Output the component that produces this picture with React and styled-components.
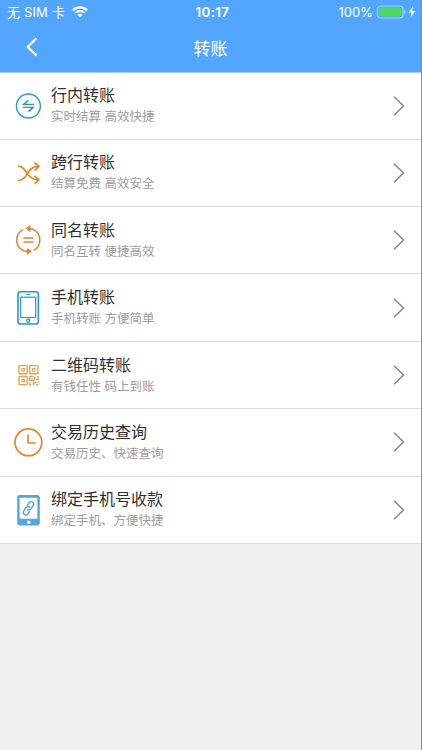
import styled, { createGlobalStyle } from "styled-components";

const ORANGE = "#e0852a";
const TEAL = "#2b97c0";

const items = [
  { title: "行内转账", desc: "实时结算 高效快捷", icon: <ExchangeIcon /> },
  { title: "跨行转账", desc: "结算免费 高效安全", icon: <ShuffleIcon /> },
  { title: "同名转账", desc: "同名互转 便捷高效", icon: <CycleIcon /> },
  { title: "手机转账", desc: "手机转账 方便简单", icon: <PhoneIcon /> },
  { title: "二维码转账", desc: "有钱任性 码上到账", icon: <QrIcon /> },
  { title: "交易历史查询", desc: "交易历史、快速查询", icon: <ClockIcon /> },
  { title: "绑定手机号收款", desc: "绑定手机、方便快捷", icon: <BindIcon /> },
];

function ExchangeIcon() {
  return (
    <Icon viewBox="0 0 30 34" $color={TEAL}>
      <circle cx="15.4" cy="17" r="12" strokeWidth="1.4" />
      <path d="M21 15.4H10.6L15.4 11.2M9.8 18.4H20.2L15.4 22.6" strokeWidth="1.4" />
    </Icon>
  );
}

function ShuffleIcon() {
  return (
    <Icon viewBox="0 0 30 34" $color={ORANGE}>
      <path
        d="M4.8 10.2C14.6 10.2 13 23.8 25.4 23.8M4.8 24.5C15.8 24.5 12.6 10.4 25.4 10.4"
        strokeWidth="1.7"
      />
      <path d="M21.4 6.6L25.8 10.4L21.8 14.6M21.4 19.8L25.8 23.8L21.8 27.8" strokeWidth="1.8" />
    </Icon>
  );
}

function CycleIcon() {
  return (
    <Icon viewBox="0 0 30 34" $color={ORANGE}>
      <path
        d="M10.2 6.6A11.7 11.7 0 0 0 10.6 27.8L15.4 28.6M20.6 27.4A11.7 11.7 0 0 0 20 6.4L15.4 5.6"
        strokeWidth="1.5"
      />
      <path
        d="M12.6 5.6L17.4 2V9.2ZM18.8 28.4L14.2 24.8V31.8Z"
        fill={ORANGE}
        stroke="none"
      />
      <path d="M10.4 15H20.6M10.4 19H20.6" strokeWidth="1.5" />
    </Icon>
  );
}

function PhoneIcon() {
  return (
    <Icon viewBox="0 0 30 34" $color={TEAL}>
      <rect x="5" y="0.8" width="20.4" height="32.2" rx="2.6" strokeWidth="1.6" />
      <rect x="7.7" y="6.2" width="15" height="20.3" strokeWidth="1.2" />
      <path d="M13.2 3.5H17.2" strokeWidth="1.2" />
      <circle cx="15.2" cy="29.7" r="1.6" strokeWidth="1.3" />
    </Icon>
  );
}

function QrIcon() {
  return (
    <Icon viewBox="0 0 30 34" $color="#e4a058">
      <rect x="6" y="7.6" width="8.2" height="8.2" rx="0.6" strokeWidth="1.4" />
      <rect x="16.8" y="7.6" width="8.2" height="8.2" rx="0.6" strokeWidth="1.4" />
      <rect x="6" y="18.4" width="8.2" height="8.2" rx="0.6" strokeWidth="1.4" />
      <rect x="9" y="10.6" width="2.4" height="2.4" strokeWidth="1.1" />
      <rect x="19.6" y="10.6" width="2.4" height="2.4" strokeWidth="1.1" />
      <rect x="9" y="21.4" width="2.4" height="2.4" strokeWidth="1.1" />
      <path
        d="M20.4 18.4H16.8V22.6H19V20.7M21.7 22.2V18.6M24.9 17.9V21.6H23.2M19.8 22.8H21.4M16.8 24.6V26.8H18.4M20.5 27.2V24.7H23M24.9 23.4V24.8M22.8 26.7H25.4"
        strokeWidth="1.4"
      />
    </Icon>
  );
}

function ClockIcon() {
  return (
    <Icon viewBox="0 0 30 34" $color={ORANGE}>
      <circle cx="15.4" cy="17.3" r="13.4" strokeWidth="1.7" />
      <path d="M15 9.4V18H22.8" strokeWidth="1.6" />
    </Icon>
  );
}

function BindIcon() {
  return (
    <Icon viewBox="0 0 30 34" $color="#56a5dc">
      <rect x="4.2" y="2" width="22.6" height="30.4" rx="2.4" fill="#56a5dc" stroke="none" />
      <rect x="6.6" y="4.8" width="17.8" height="21" rx="1" fill="#fff" stroke="none" />
      <circle cx="15.7" cy="29.3" r="1.8" fill="#fff" stroke="none" />
      <g transform="translate(15.5 15.3) rotate(-58)" strokeWidth="1.5">
        <path d="M-1.6 2.5H-4.9A2.5 2.5 0 0 1 -4.9 -2.5H-0.8A2.5 2.5 0 0 1 1.4 1" />
        <path d="M1.6 -2.5H4.9A2.5 2.5 0 0 1 4.9 2.5H0.8A2.5 2.5 0 0 1 -1.4 -1" />
      </g>
    </Icon>
  );
}

function App() {
  return (
    <Page>
      <GlobalStyle />
      <Header>
        <StatusBar>
          <Carrier>
            <span>无 SIM 卡</span>
            <svg width="16" height="12" viewBox="0 0 16 12" fill="none" stroke="#fff">
              <path d="M0.8 4.2A10.4 10.4 0 0 1 15.2 4.2" strokeWidth="2.2" />
              <path d="M3.3 6.9A6.7 6.7 0 0 1 12.7 6.9" strokeWidth="2" />
              <path d="M8 11.4L5.5 8.9A3.6 3.6 0 0 1 10.5 8.9Z" fill="#fff" stroke="none" />
            </svg>
          </Carrier>
          <Time>10:17</Time>
          <Power>
            <span>100%</span>
            <svg width="39" height="14" viewBox="0 0 39 14">
              <rect x="0.5" y="1" width="25.5" height="12" rx="3" fill="none" stroke="#a9d4fb" />
              <rect x="2" y="2.5" width="22.5" height="9" rx="1.6" fill="#4cd964" />
              <path d="M27.2 5V9Q28.5 8.4 28.5 7T27.2 5Z" fill="#a9d4fb" />
              <path d="M36 1.2L31.8 7.6H34.7L33.7 12.4L38.3 5.9H35.2Z" fill="#fff" />
            </svg>
          </Power>
        </StatusBar>
        <NavBar>
          <BackButton aria-label="返回">
            <svg width="12" height="20" viewBox="0 0 12 20" fill="none" stroke="#fff">
              <path d="M10.4 1.2L1.8 10L10.4 18.6" strokeWidth="2.2" />
            </svg>
          </BackButton>
          <NavTitle>转账</NavTitle>
        </NavBar>
      </Header>
      <List>
        {items.map((item) => (
          <Row key={item.title}>
            {item.icon}
            <Info>
              <Title>{item.title}</Title>
              <Desc>{item.desc}</Desc>
            </Info>
            <Arrow viewBox="0 0 12 20">
              <path d="M1 0.8L10.5 10L1 19.2" />
            </Arrow>
          </Row>
        ))}
      </List>
    </Page>
  );
}

const GlobalStyle = createGlobalStyle`
  * {
    box-sizing: border-box;
  }
  body {
    margin: 0;
    font-family: Inter, "Noto Sans CJK SC", sans-serif;
  }
`;

const Page = styled.div`
  height: 750px;
  overflow: hidden;
  background: #efefef;
  border-right: 1px solid #8b8d90;
`;

const Header = styled.header`
  height: 73px;
  margin-right: -1px;
  color: #fff;
  background: #53a6fe;
  border-right: 1px solid #4381c4;
  border-bottom: 1px solid #a9ccf5;
`;

const StatusBar = styled.div`
  display: grid;
  grid-template-columns: 1fr auto 1fr;
  align-items: center;
  height: 24px;
  padding: 0 5px 0 7px;
  font-size: 13px;
  line-height: 24px;
  white-space: nowrap;
`;

const Carrier = styled.div`
  display: flex;
  align-items: center;
  gap: 7px;
  letter-spacing: 0.15px;
`;

const Time = styled.div`
  padding-left: 2px;
  font-size: 13.5px;
  font-weight: 600;
  letter-spacing: 0.3px;
`;

const Power = styled.div`
  display: flex;
  justify-content: flex-end;
  align-items: center;
  gap: 4px;
`;

const NavBar = styled.div`
  display: grid;
  grid-template-columns: 60px 1fr 60px;
  align-items: center;
  height: 48px;
`;

const BackButton = styled.button`
  display: flex;
  padding: 0 0 2px 26px;
  border: 0;
  background: none;
`;

const NavTitle = styled.h1`
  margin: 0;
  padding-top: 2px;
  font-size: 17px;
  font-weight: 400;
  line-height: 46px;
  text-align: center;
`;

const List = styled.ul`
  margin: 0;
  padding: 0;
  list-style: none;
`;

const Row = styled.li`
  display: flex;
  align-items: center;
  height: 67.4px;
  padding: 0 16px 0 13px;
  background: #fff;
  border-bottom: 1px solid #dcdcdc;

  &:first-child {
    height: 66.6px;
  }
`;

const Icon = styled.svg`
  flex: none;
  width: 30px;
  height: 34px;
  fill: none;
  stroke: ${(props) => props.$color};
`;

const Info = styled.div`
  flex: 1;
  padding: 1.2px 0 0 8px;
`;

const Title = styled.div`
  color: #303030;
  font-size: 16px;
  line-height: 22px;
`;

const Desc = styled.div`
  color: #9c9c9c;
  font-size: 12.5px;
  line-height: 22px;
`;

const Arrow = styled.svg`
  flex: none;
  width: 12px;
  height: 20px;
  fill: none;
  stroke: #858585;
  stroke-width: 1.5;
`;

export default App;
